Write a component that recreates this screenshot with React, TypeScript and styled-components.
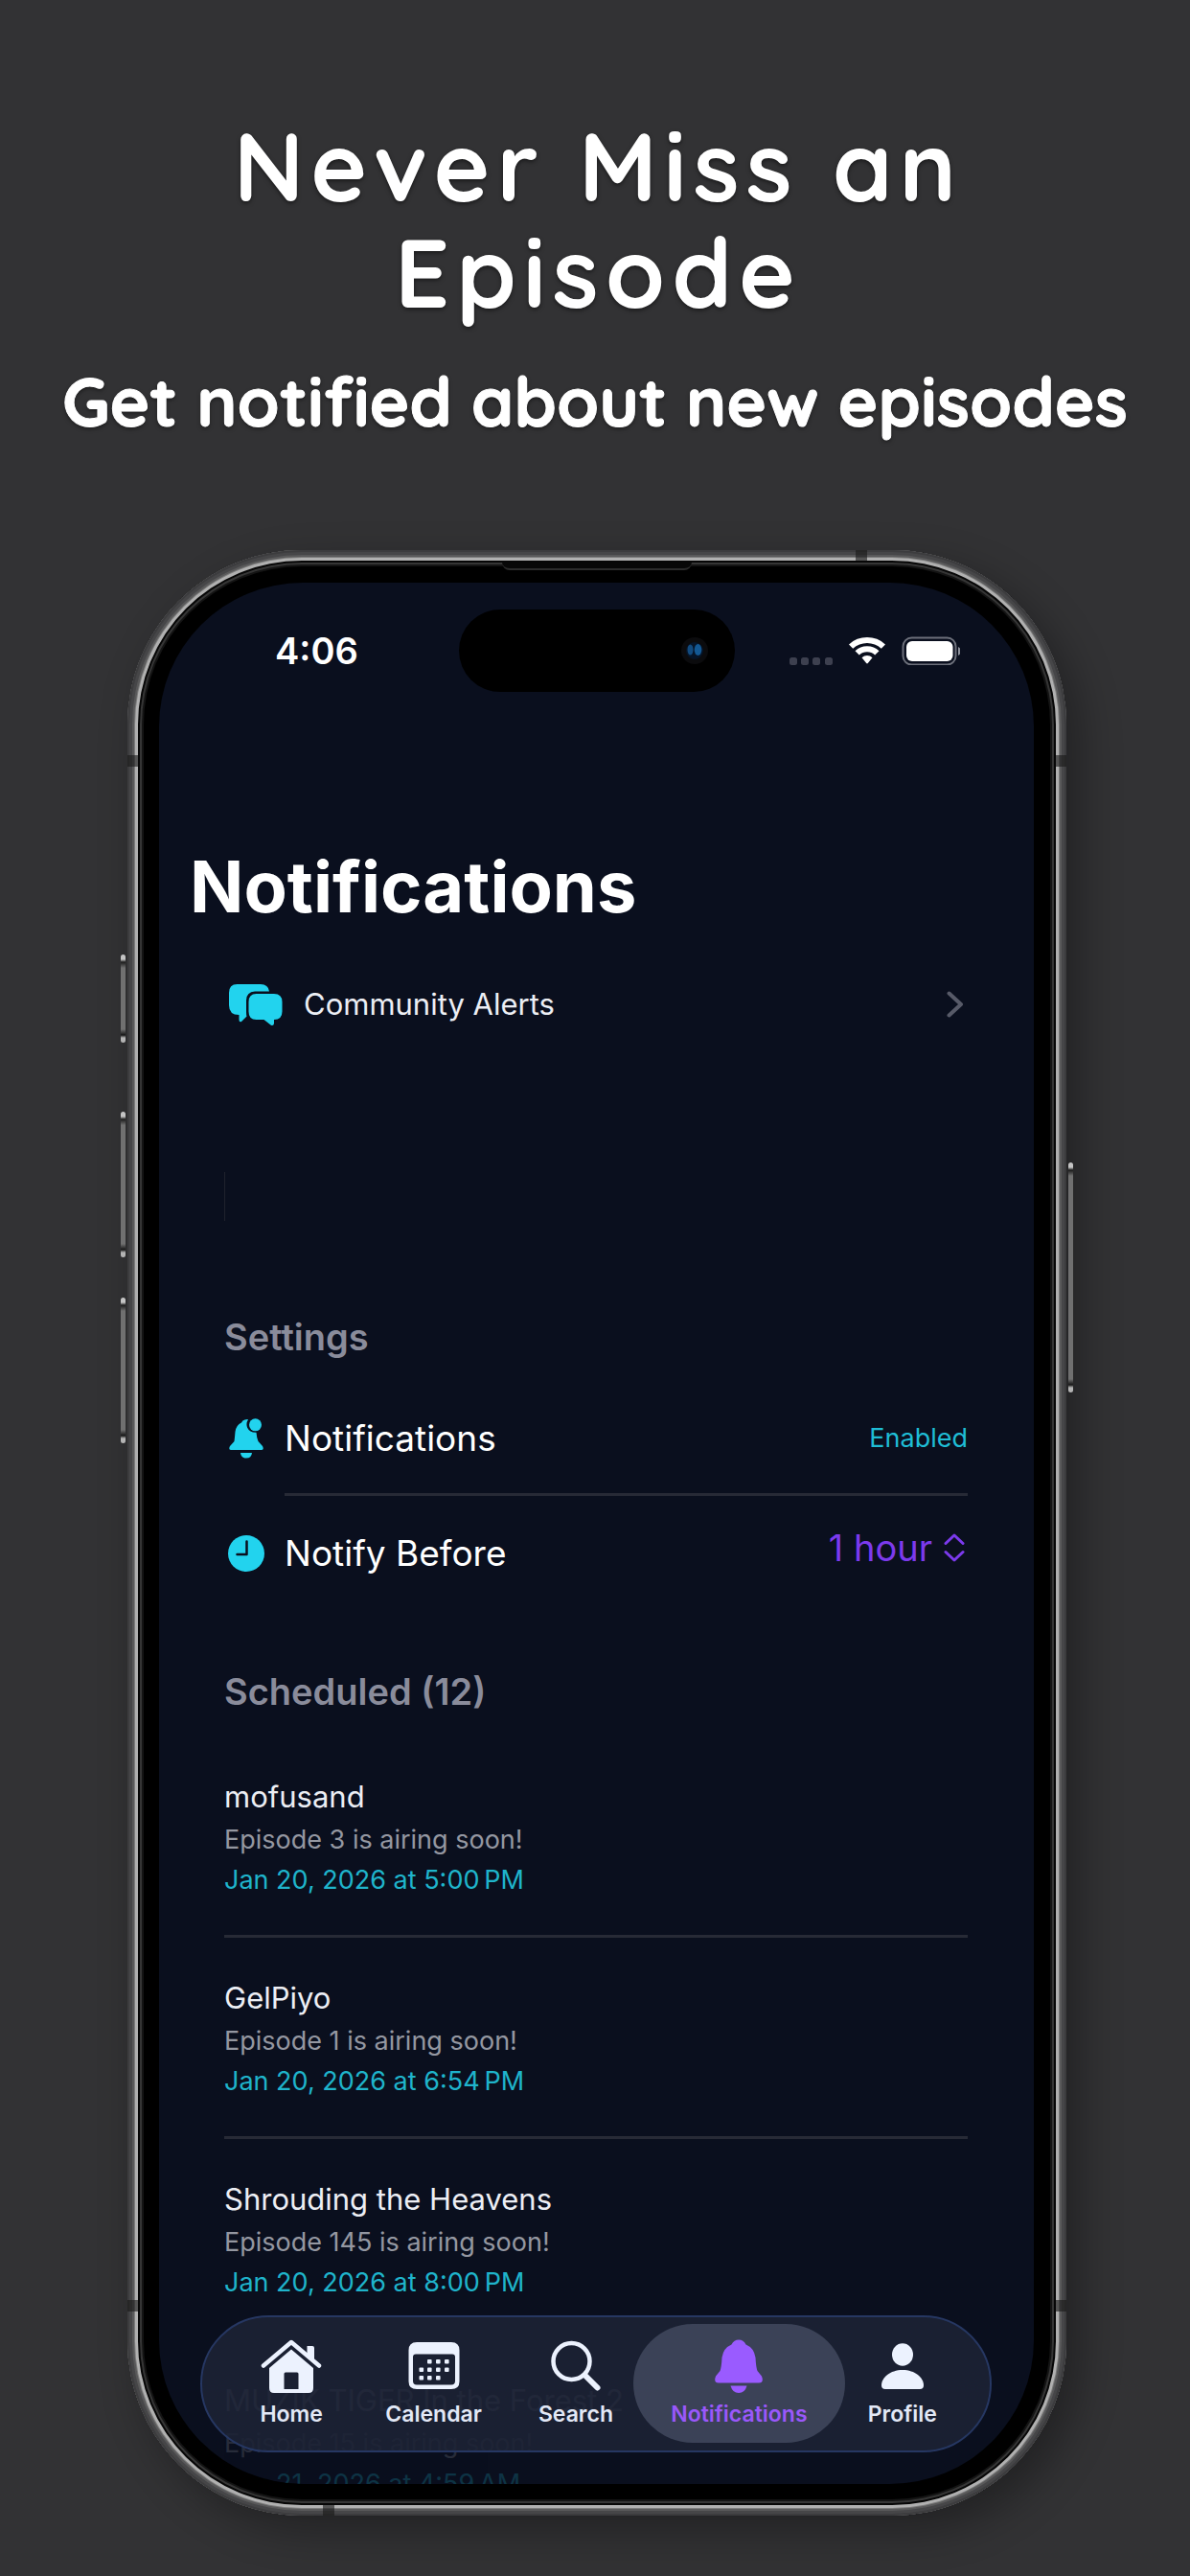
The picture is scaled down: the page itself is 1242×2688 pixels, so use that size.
import React from "react";
import styled, { createGlobalStyle } from "styled-components";

const GlobalStyle = createGlobalStyle`
  * { box-sizing: border-box; }
  body { margin: 0; background: #323234; }
  h1, h2, h3, p, ul { margin: 0; padding: 0; font-weight: inherit; }
  button, select { font: inherit; color: inherit; background: none; border: 0; padding: 0; margin: 0; }
`;

const sans = `Inter, "Liberation Sans", sans-serif`;
const rounded = `Quicksand, Lato, "Open Sans", sans-serif`;

const Page = styled.main`
  display: flex;
  flex-direction: column;
  padding-bottom: 63px;
  font-family: ${sans};
  color: #fff;
  overflow: hidden;
`;

const Hero = styled.header`
  display: flex;
  flex-direction: column;
  align-items: center;
  padding: 117px 40px 110px;
  gap: 35px;
  font-family: ${rounded};
  text-align: center;
  text-shadow: 0 2px 4px rgba(0, 0, 0, 0.5);
`;

const HeroTitle = styled.h1`
  max-width: 900px;
  padding-left: 7px;
  font-size: 100px;
  line-height: 111px;
  font-weight: 700;
  letter-spacing: 7px;
`;

const HeroText = styled.p`
  font-size: 71px;
  line-height: 90px;
  font-weight: 700;
  -webkit-text-stroke: 1px #fff;
`;

const Device = styled.section`
  position: relative;
  margin: 0 129px 0 133px;
  padding: 34px 34px 33px 33px;
  border-radius: 182px;
  background: #000;
  box-shadow:
    inset 0 0 0 2px #3c3c3e,
    inset 0 0 0 5px #464648,
    inset 0 0 0 7px #59595a,
    inset 0 0 0 8px #7c7c7c,
    inset 0 0 0 11px #b0b0b0,
    inset 0 0 0 13px #060606,
    inset 0 0 0 15px #353535,
    inset 0 0 0 17px #141414,
    14px 16px 44px rgba(0, 0, 0, 0.32);
`;

const SideKey = styled.i<{ $side: "left" | "right"; $top: number; $length: number }>`
  position: absolute;
  ${(p) => p.$side}: -7px;
  top: ${(p) => p.$top}px;
  width: 5px;
  height: ${(p) => p.$length}px;
  border-radius: 3px;
  background: linear-gradient(
    #c4c4c4 0 5px,
    #1c1c1c 8px,
    #707070 14px calc(100% - 14px),
    #161616 calc(100% - 8px),
    #b4b4b4 calc(100% - 5px)
  );
`;

const Band = styled.i<{ $edge: "left" | "right" | "top" | "bottom"; $at: string }>`
  position: absolute;
  background: rgba(24, 24, 24, 0.6);
  ${(p) => p.$edge}: 0;
  ${(p) =>
    p.$edge === "left" || p.$edge === "right"
      ? `top: ${p.$at}; width: 11px; height: 12px;`
      : `left: ${p.$at}; width: 12px; height: 11px;`}
`;

const Earpiece = styled.i`
  position: absolute;
  top: 13px;
  left: 50%;
  width: 198px;
  height: 8px;
  margin-left: -99px;
  background: #080808;
  border-bottom: 2px solid #2c2c2c;
  border-radius: 0 0 8px 8px;
`;

const Screen = styled.div`
  position: relative;
  aspect-ratio: 913 / 1984;
  overflow: hidden;
  border-radius: 150px;
  background: #0a0f1e;
`;

const StatusBar = styled.div`
  display: grid;
  grid-template-columns: 1fr 288px 1fr;
  align-items: center;
  padding-top: 28px;
`;

const Clock = styled.time`
  padding-left: 121px;
  font-size: 38px;
  line-height: 46px;
  font-weight: 600;
`;

const Island = styled.div`
  display: flex;
  align-items: center;
  justify-content: flex-end;
  height: 86px;
  padding-right: 28px;
  border-radius: 43px;
  background: #000;
`;

const StatusIcons = styled.div`
  display: flex;
  justify-content: flex-end;
  padding-right: 77px;
`;

const Content = styled.div`
  display: flex;
  flex-direction: column;
  padding: 159px 69px 0 68px;
`;

const ScreenTitle = styled.h2`
  margin-left: -36px;
  font-size: 74px;
  line-height: 88px;
  font-weight: 700;
`;

const AlertsRow = styled.button`
  display: flex;
  align-items: center;
  gap: 22px;
  height: 60px;
  margin-top: 49px;
  padding: 0 4px;
  font-size: 31px;
  line-height: 40px;
  text-align: left;
  color: #eceef4;
  span { flex: 1; }
`;

const CaretLine = styled.div`
  width: 1px;
  height: 51px;
  margin: 145px 0 96px;
  background: #1f212d;
`;

const SectionTitle = styled.h3`
  font-size: 38px;
  line-height: 50px;
  font-weight: 600;
  color: #8a8c9b;
`;

const Settings = styled.div`
  display: flex;
  flex-direction: column;
  margin: 21px 0 59px;
`;

const Setting = styled.div`
  display: flex;
  align-items: center;
  gap: 21px;
  padding-left: 4px;
  > svg { flex: none; }
`;

const SettingBody = styled.div<{ $divided?: boolean }>`
  display: flex;
  flex: 1;
  align-items: center;
  justify-content: space-between;
  height: 120px;
  padding-top: 3px;
  font-size: 37px;
  line-height: 48px;
  border-bottom: 3px solid ${(p) => (p.$divided ? "#272a36" : "transparent")};
`;

const State = styled.span`
  font-size: 27px;
  color: #1fbdd5;
`;

const Picker = styled.div`
  display: flex;
  align-items: center;
  gap: 12px;
  padding: 0 3px 12px 0;
  color: #7c3aed;
  select {
    appearance: none;
    font-size: 38px;
    line-height: 48px;
    text-align-last: right;
    outline: none;
  }
`;

const List = styled.ul`
  list-style: none;
  margin-top: 22px;
`;

const Item = styled.li<{ $plain?: boolean; $fade?: number }>`
  display: flex;
  flex-direction: column;
  height: 210px;
  padding-top: 39px;
  border-bottom: 3px solid ${(p) => (p.$plain ? "transparent" : "#272a36")};
  opacity: ${(p) => p.$fade ?? 1};
`;

const ItemTitle = styled.p`
  font-size: 31px;
  line-height: 48px;
  color: #eceef4;
`;

const ItemText = styled.p`
  font-size: 27px;
  line-height: 42px;
  color: #9497a1;
`;

const ItemTime = styled(ItemText)`
  color: #1fb4cb;
`;

const TabBar = styled.nav`
  position: absolute;
  left: 43px;
  right: 44px;
  bottom: 33px;
  display: flex;
  height: 143px;
  padding: 0 17px 0 19px;
  border: 2px solid #263762;
  border-radius: 72px;
  background: rgba(29, 35, 54, 0.86);
`;

const Tab = styled.a<{ $active?: boolean }>`
  position: relative;
  display: flex;
  flex-direction: column;
  flex: ${(p) => (p.$active ? "192" : "148")} 1 0;
  align-items: center;
  padding-top: 22px;
  gap: 6px;
  font-size: 23px;
  line-height: 30px;
  font-weight: 600;
  text-decoration: none;
  color: ${(p) => (p.$active ? "#9a58fb" : "#e2e8f6")};
  &::before {
    content: "";
    display: ${(p) => (p.$active ? "block" : "none")};
    position: absolute;
    inset: 7px -14px 8px;
    border-radius: 62px;
    background: #3b4257;
  }
  svg, span { position: relative; }
`;

const StatusGlyphs = () => (
  <svg width="178" height="30" viewBox="0 0 178 30" fill="#fff" aria-hidden="true">
    <g fill="#3d404f">
      <rect x="0" y="22" width="8" height="8" rx="2.5" />
      <rect x="12" y="22" width="8" height="8" rx="2.5" />
      <rect x="24" y="22" width="8" height="8" rx="2.5" />
      <rect x="37" y="22" width="8" height="8" rx="2.5" />
    </g>
    <path d="M62 8.500A27.500 27.500 0 0 1 100 8.500L95.800 12.800A21.500 21.500 0 0 0 66.200 12.800Z" />
    <path d="M68.500 15.200A18 18 0 0 1 93.500 15.200L89.200 19.600A12 12 0 0 0 72.800 19.600Z" />
    <path d="M75.500 22.200A8 8 0 0 1 86.500 22.200L82 27.800Q81 29 80 27.800Z" />
    <rect x="118.500" y="1.500" width="55" height="28" rx="9" fill="none" stroke="#6c6f7a" strokeWidth="2" />
    <rect x="122" y="5" width="48.500" height="21" rx="6" />
    <path d="M176 11Q179 12.500 179 15.500T176 20Z" fill="#8d909a" />
  </svg>
);

const Camera = () => (
  <svg width="28" height="28" viewBox="0 0 28 28" aria-hidden="true">
    <circle cx="14" cy="14" r="14" fill="#0b0b0d" />
    <circle cx="14" cy="14" r="9" fill="#061427" />
    <ellipse cx="9.500" cy="13" rx="3" ry="5.500" fill="#124a7d" />
    <ellipse cx="17.500" cy="13" rx="3.800" ry="6" fill="#135893" />
  </svg>
);

const Bubbles = () => (
  <svg width="57" height="44" viewBox="0 0 57 44" fill="#22d3ee" aria-hidden="true">
    <path d="M9.500 1H34Q42 1 43 8.500H28Q19 9 19 18V30Q19 33 19.500 34.500L14 40Q11.500 41 11.500 38V33Q1 33 1 23V10Q1 1 9.500 1Z" />
    <path d="M29.500 11H48Q56.500 11 56.500 19.500V29.500Q56.500 38 48 38V42Q47.500 45 44.500 43.500L37.500 38H29.500Q21.500 38 21.500 29.500V19.500Q21.500 11 29.500 11Z" />
  </svg>
);

const Chevron = () => (
  <svg width="18" height="28" viewBox="0 0 18 28" fill="none" stroke="#575a68" strokeWidth="4" strokeLinecap="round" strokeLinejoin="round" aria-hidden="true">
    <path d="M2.500 2.500L15 14L2.500 25.500" />
  </svg>
);

const BellBadge = () => (
  <svg width="38" height="42" viewBox="0 0 38 42" fill="#22d3ee" aria-hidden="true">
    <path d="M17.500 1.500Q20 .8 21 1.200Q18.500 5 20 9.500Q22.500 15 29.500 14.800Q30 21 31.500 24L36 29Q38 33 34.500 33H3.500Q0 33 2 29L6.500 24Q7 20 7.500 14Q8.500 7 14 4.500Q15 2 17.500 1.500Z" />
    <path d="M13 36H25Q24.500 41.500 19 41.500T13 36Z" />
    <circle cx="28.500" cy="6.800" r="6.500" />
  </svg>
);

const ClockIcon = () => (
  <svg width="38" height="40" viewBox="0 0 38 40" aria-hidden="true">
    <circle cx="19" cy="20" r="19" fill="#22d3ee" />
    <path d="M19.500 7.500V21H9.500" fill="none" stroke="#0a0f1e" strokeWidth="2.500" strokeLinecap="round" strokeLinejoin="round" />
  </svg>
);

const UpDown = () => (
  <svg width="22" height="30" viewBox="0 0 22 30" fill="none" stroke="currentColor" strokeWidth="3" strokeLinecap="round" strokeLinejoin="round" aria-hidden="true">
    <path d="M2 10.500L11 2L20 10.500M2 19.500L11 28L20 19.500" />
  </svg>
);

const Home = () => (
  <svg width="64" height="58" viewBox="0 0 64 58" fill="#ecf2fe" aria-hidden="true">
    <path d="M3 28.500L32 4L61 28.500" fill="none" stroke="#ecf2fe" strokeWidth="4.500" strokeLinecap="round" strokeLinejoin="round" />
    <path d="M48.500 8H54Q56 8 56 10V25L48.500 18.500Z" />
    <path fillRule="evenodd" d="M32 11.500L55 31V52Q55 57 50 57H14Q9 57 9 52V31ZM26 35.500Q24.500 35.500 24.500 37V53H39.500V37Q39.500 35.500 38 35.500Z" />
  </svg>
);

const CalendarIcon = () => (
  <svg width="54" height="58" viewBox="0 0 54 58" fill="#ecf2fe" aria-hidden="true">
    <path fillRule="evenodd" d="M9 4H45Q53.500 4 53.500 12.500V45Q53.500 53 45 53H9Q.5 53 .5 45V12.500Q.5 4 9 4ZM8 16.500Q5 16.500 5 19.500V44.500Q5 48.500 9 48.500H45Q49 48.500 49 44.500V19.500Q49 16.500 46 16.500Z" />
    {[[20, 22], [29, 22], [38, 22], [11.5, 30.5], [20, 30.5], [29, 30.5], [38, 30.5], [11.5, 39], [20, 39], [29, 39]].map(([x, y]) => (
      <rect key={`${x}-${y}`} x={x} y={y} width="4.600" height="4.600" rx="1" />
    ))}
  </svg>
);

const SearchIcon = () => (
  <svg width="54" height="58" viewBox="0 0 54 58" fill="none" stroke="#ecf2fe" strokeLinecap="round" aria-hidden="true">
    <circle cx="22.500" cy="24" r="19" strokeWidth="4.500" />
    <path d="M36.500 38.500L49.500 51.500" strokeWidth="6" />
  </svg>
);

const Bell = () => (
  <svg width="50" height="58" viewBox="0 0 50 58" fill="#9a5bff" aria-hidden="true">
    <path d="M25 1.500Q30 1.500 32.500 6.500Q41 10 42.500 20Q43 30 44.500 34L49 39.500Q51.500 46.500 46 46.500H4Q-1.500 46.500 1 39.500L5.500 34Q7 30 7.500 20Q9 10 17.500 6.500Q20 1.500 25 1.500Z" />
    <path d="M16.500 49.500H33.500Q31.500 57 25 57T16.500 49.500Z" />
  </svg>
);

const Person = () => (
  <svg width="46" height="58" viewBox="0 0 46 58" fill="#ecf2fe" aria-hidden="true">
    <ellipse cx="23" cy="17" rx="11" ry="11.800" />
    <path d="M23 33C36 33 45 41 45 49Q45 53 41 53H5Q1 53 1 49C1 41 10 33 23 33Z" />
  </svg>
);

const scheduled = [
  { title: "mofusand", text: "Episode 3 is airing soon!", time: "Jan 20, 2026 at 5:00\u202fPM" },
  { title: "GelPiyo", text: "Episode 1 is airing soon!", time: "Jan 20, 2026 at 6:54\u202fPM" },
  { title: "Shrouding the Heavens", text: "Episode 145 is airing soon!", time: "Jan 20, 2026 at 8:00\u202fPM", plain: true },
  { title: "MUZIK TIGER In the Forest 2", text: "Episode 15 is airing soon!", time: "Jan 21, 2026 at 4:59\u202fAM", plain: true, fade: 0.22 },
];

const tabs = [
  { label: "Home", icon: <Home /> },
  { label: "Calendar", icon: <CalendarIcon /> },
  { label: "Search", icon: <SearchIcon /> },
  { label: "Notifications", icon: <Bell />, active: true },
  { label: "Profile", icon: <Person /> },
];

export default function App() {
  return (
    <Page>
      <GlobalStyle />
      <Hero>
        <HeroTitle>Never Miss an Episode</HeroTitle>
        <HeroText>Get notified about new episodes</HeroText>
      </Hero>
      <Device>
        <SideKey $side="left" $top={422} $length={92} />
        <SideKey $side="left" $top={586} $length={152} />
        <SideKey $side="left" $top={780} $length={152} />
        <SideKey $side="right" $top={639} $length={240} />
        <Band $edge="left" $at="214px" />
        <Band $edge="right" $at="214px" />
        <Band $edge="left" $at="calc(100% - 225px)" />
        <Band $edge="right" $at="calc(100% - 225px)" />
        <Band $edge="top" $at="calc(100% - 220px)" />
        <Band $edge="bottom" $at="204px" />
        <Earpiece />
        <Screen>
          <StatusBar>
            <Clock>4:06</Clock>
            <Island><Camera /></Island>
            <StatusIcons><StatusGlyphs /></StatusIcons>
          </StatusBar>
          <Content>
            <ScreenTitle>Notifications</ScreenTitle>
            <AlertsRow type="button">
              <Bubbles />
              <span>Community Alerts</span>
              <Chevron />
            </AlertsRow>
            <CaretLine />
            <SectionTitle>Settings</SectionTitle>
            <Settings>
              <Setting>
                <BellBadge />
                <SettingBody $divided>
                  <span>Notifications</span>
                  <State>Enabled</State>
                </SettingBody>
              </Setting>
              <Setting>
                <ClockIcon />
                <SettingBody>
                  <label htmlFor="notify-before">Notify Before</label>
                  <Picker>
                    <select id="notify-before" defaultValue="1 hour">
                      <option>1 hour</option>
                      <option>1 day</option>
                    </select>
                    <UpDown />
                  </Picker>
                </SettingBody>
              </Setting>
            </Settings>
            <SectionTitle>Scheduled (12)</SectionTitle>
            <List>
              {scheduled.map((s) => (
                <Item key={s.title} $plain={s.plain} $fade={s.fade}>
                  <ItemTitle>{s.title}</ItemTitle>
                  <ItemText>{s.text}</ItemText>
                  <ItemTime>{s.time}</ItemTime>
                </Item>
              ))}
            </List>
          </Content>
          <TabBar>
            {tabs.map((t) => (
              <Tab key={t.label} href={`#${t.label.toLowerCase()}`} $active={t.active} aria-current={t.active ? "page" : undefined}>
                {t.icon}
                <span>{t.label}</span>
              </Tab>
            ))}
          </TabBar>
        </Screen>
      </Device>
    </Page>
  );
}
